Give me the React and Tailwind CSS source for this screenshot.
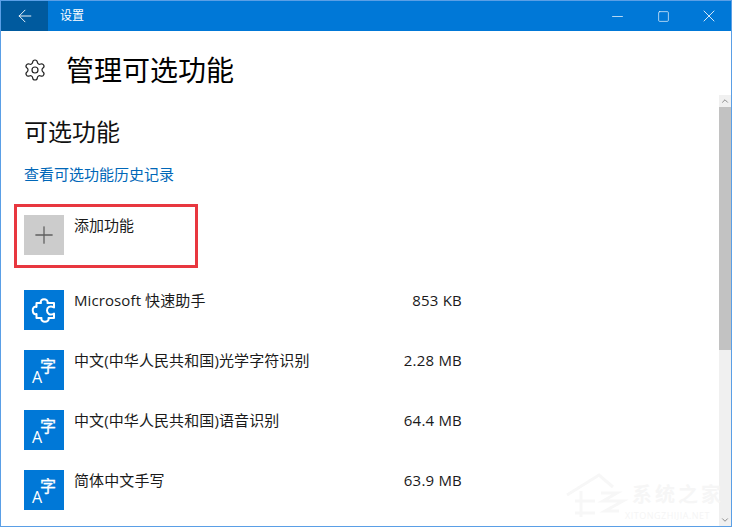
import React from "react";
import { ArrowLeft, Minus, Square, X, Settings, Plus, ChevronUp, ChevronDown } from "lucide-react";

const font = { fontFamily: '"Open Sans", "Noto Sans CJK SC", sans-serif' };

function PuzzleIcon() {
  return (
    <svg width="40" height="40" viewBox="0 0 40 40" fill="none" stroke="white" strokeWidth="2" strokeLinejoin="round">
      <path d="M17 13C15 8 25 8 23.500 13H30V17.500C26 15 23 17.500 23 20.500 23 23.500 26 26 30 23.500V28H24.500C26 33 16 33 17.500 28H12.500V24C8 26 7 15 12.500 17V13Z" />
    </svg>
  );
}

function LangIcon() {
  return (
    <svg width="40" height="40" viewBox="0 0 40 40" fill="white">
      <text x="8" y="32.500" fontSize="16">A</text>
      <text x="16" y="22" fontSize="16" stroke="white" strokeWidth="0.3">字</text>
    </svg>
  );
}

function Row({ icon, name, size }) {
  return (
    <div className="flex h-[40px] mb-[20px]">
      <div className="w-[40px] h-[40px] bg-[#0078d7] flex items-center justify-center shrink-0">{icon}</div>
      <div className="ml-[10px] w-[388px] flex justify-between text-[15px] leading-[22px] text-[#1a1a1a] -mt-px">
        <span className="tracking-[0.1px]">{name}</span>
        <span className="tracking-[0.2px]">{size}</span>
      </div>
    </div>
  );
}

export default function App() {
  return (
    <div className="relative w-[732px] h-[527px] overflow-hidden bg-white border border-[#5a9fe6] flex flex-col" style={font}>
      <div className="h-[30px] bg-[#0078d7] flex items-center text-white shrink-0">
        <div className="w-[47px] h-full bg-[#005a9e] flex items-center justify-center">
          <ArrowLeft size={20} strokeWidth={1.1} />
        </div>
        <span className="ml-[12px] text-[12px]">设置</span>
        <div className="ml-auto flex items-center">
          <div className="w-[46px] flex justify-center"><Minus size={17} strokeWidth={1} /></div>
          <div className="w-[46px] mr-px flex justify-center"><Square size={13} strokeWidth={1.2} /></div>
          <div className="w-[44px] flex justify-center"><X size={20} strokeWidth={1} /></div>
        </div>
      </div>

      <div className="flex flex-1 min-h-0">
        <div className="flex-1 pl-[23px] min-w-0">
          <div className="flex items-center h-[40px] mt-[19px]">
            <Settings size={24} strokeWidth={1.2} className="-ml-[1px] text-[#222]" />
            <h1 className="ml-[19px] text-[28px] leading-[40px] text-black">管理可选功能</h1>
          </div>
          <h2 className="mt-[24px] text-[24px] leading-[36px] text-[#111]">可选功能</h2>
          <a className="block mt-[13px] text-[15px] leading-[22px] text-[#0067b8]">查看可选功能历史记录</a>

          <div className="mt-[30px] mb-[35px] h-[40px] flex relative">
            <div className="w-[40px] h-[40px] bg-[#cccccc] flex items-center justify-center">
              <Plus size={28} strokeWidth={1.1} className="text-[#5f5f5f]" />
            </div>
            <span className="ml-[10px] text-[15px] leading-[22px] text-[#1a1a1a] -mt-px">添加功能</span>
            <div className="absolute left-[-10px] top-[-11px] w-[184px] h-[64px] border-[3px] border-[#e8373f]" />
          </div>

          <Row icon={<PuzzleIcon />} name="Microsoft 快速助手" size="853 KB" />
          <Row icon={<LangIcon />} name="中文(中华人民共和国)光学字符识别" size="2.28 MB" />
          <Row icon={<LangIcon />} name="中文(中华人民共和国)语音识别" size="64.4 MB" />
          <Row icon={<LangIcon />} name="简体中文手写" size="63.9 MB" />
        </div>

        <div className="w-[12px] mt-[64px] bg-[#f0f0f0] flex flex-col shrink-0">
          <div className="h-[12px] flex items-center justify-center text-[#777]"><ChevronUp size={10} /></div>
          <div className="h-[243px] bg-[#c2c2c2]" />
          <div className="mt-auto h-[12px] flex items-center justify-center text-[#777]"><ChevronDown size={10} /></div>
        </div>
      </div>

      {/* watermark */}
      <svg className="absolute left-[564px] top-[470px]" width="66" height="50" viewBox="0 0 66 50" fill="none" stroke="#f7f7f7" strokeWidth="3">
        <path d="M2 24 34 4 48 16M16 20V46M10 30H30M10 42H30M36 22H52L38 30H58L40 40H54" />
      </svg>
      <div className="absolute left-[631px] top-[482px] text-[20px] leading-[24px] tracking-[3px] text-[#f6f6f6] font-bold">系统之家</div>
      <div className="absolute left-[624px] top-[510px] text-[9px] leading-[10px] tracking-[0.5px] text-[#f5f5f5]">XITONGZHIJIA.NET</div>
    </div>
  );
}
